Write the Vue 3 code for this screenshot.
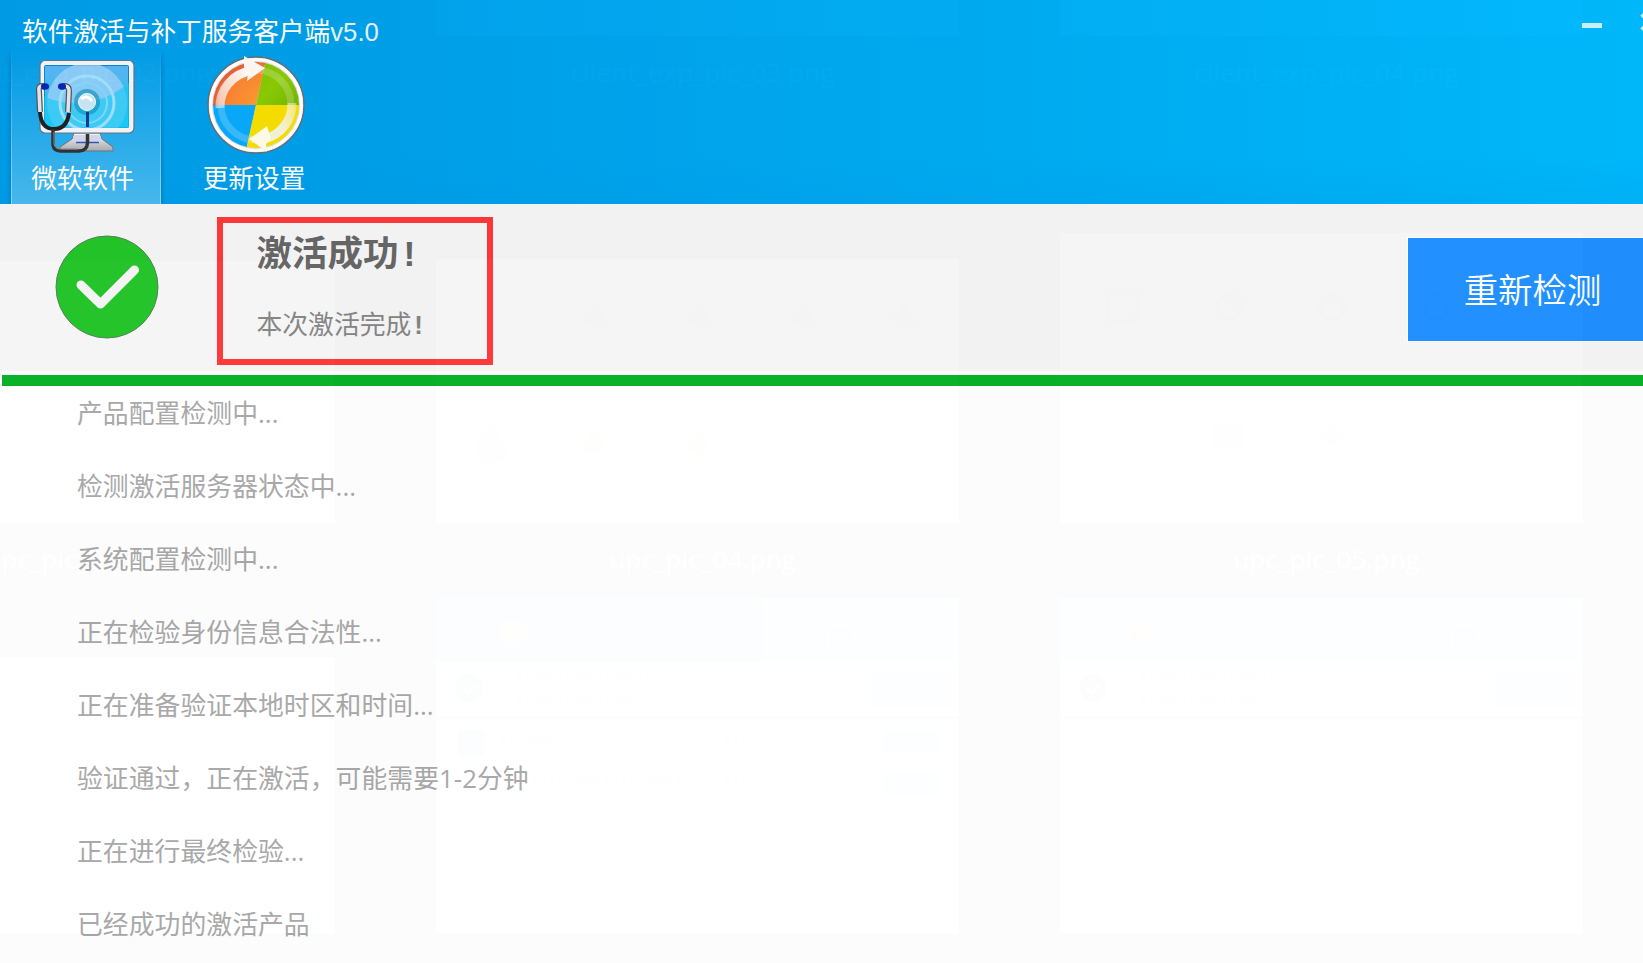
<template>
  <div class="desktop">
    <div class="files">
      <div v-for="row in fileRows" :key="row.id" :class="['file-row', row.id]">
        <div v-for="file in row.files" :key="file.id" class="file">
          <div :class="['thumb', file.kind]">
            <svg v-if="file.kind === 'shot'" width="523" height="335" viewBox="0 0 523 335">
              <rect width="523" height="64" fill="#1a9cf0" />
              <circle cx="78" cy="36" r="14" fill="#f0b040" />
              <circle cx="405" cy="40" r="14" fill="none" stroke="#fff" stroke-width="3" />
              <circle cx="33" cy="90" r="14" fill="#4a7860" />
              <path d="M27 90L32 95L40 86" fill="none" stroke="#fff" stroke-width="3" />
              <path d="M80 79H215M80 101H200" stroke="#aaa" stroke-width="6" stroke-dasharray="7 3" />
              <rect x="435" y="75" width="80" height="34" fill="#1b80ff" />
              <rect y="118" width="523" height="3" fill="#555" />
              <g v-if="file.list">
                <rect x="22" y="132" width="26" height="26" fill="#3b8eea" />
                <path d="M65 141H120M288 141H368M95 181H250M288 181H368" stroke="#aaa" stroke-width="5" stroke-dasharray="6 3" />
                <rect x="447" y="132" width="56" height="23" fill="#6bb8ff" />
                <rect x="447" y="174" width="56" height="22" fill="#6bb8ff" />
              </g>
            </svg>
            <svg v-else-if="file.kind === 'page'" width="523" height="264" viewBox="0 0 523 264">
              <g fill="#aaa">
                <path v-for="x in [147, 252, 356, 456]" :key="x" :d="`M${x} 60l14-18 10 24-14 3z`" />
                <path d="M38 190l18-30 16 38-20 8z" />
              </g>
              <path d="M145 187l15-18 8 22-12 5zM250 187l15-18 8 22-12 5z" fill="#e0b090" />
            </svg>
            <svg v-else-if="file.kind === 'tall'" width="523" height="290" viewBox="0 0 523 290">
              <g fill="none" stroke="#aaa" stroke-width="4">
                <rect x="49" y="60" width="28" height="28" rx="3" />
                <circle v-for="x in [169, 272, 376]" :key="x" :cx="x" cy="74" r="12" />
              </g>
              <rect x="154" y="190" width="30" height="26" fill="#c9e3f5" />
              <path d="M258 203l14-12 14 12-14 10z" fill="#f0c8b0" />
            </svg>
          </div>
          <span class="file-name">{{ file.name }}</span>
        </div>
      </div>
    </div>

    <div class="client">
      <header class="header">
        <div class="titlebar">
          <h1>软件激活与补丁服务客户端<span>v5.0</span></h1>
          <div class="controls">
            <button class="minimize" aria-label="minimize"></button>
            <button class="close" aria-label="close">
              <svg width="22" height="22" viewBox="0 0 22 22">
                <path d="M2 3L20 19M20 3L2 19" stroke="#ccf1ff" stroke-width="5" />
              </svg>
            </button>
          </div>
        </div>

        <nav class="tabs">
          <button :class="['tab', { active: activeTab === 'ms' }]" @click="activeTab = 'ms'">
            <svg class="tab-icon" width="104" height="102" viewBox="32 54 104 102">
              <defs>
                <linearGradient id="screen" x1="0" y1="0" x2="0" y2="1">
                  <stop offset="0" stop-color="#58b5f3" />
                  <stop offset="1" stop-color="#20c8f5" />
                </linearGradient>
                <linearGradient id="stand" x1="0" y1="0" x2="0" y2="1">
                  <stop offset="0" stop-color="#fafafa" />
                  <stop offset="1" stop-color="#a8abb2" />
                </linearGradient>
                <clipPath id="screenClip"><rect x="43" y="65" width="85" height="63" /></clipPath>
              </defs>
              <path d="M73 133H99L101 139L112 147V151H59V147L71 139Z" fill="url(#stand)" stroke="#70757d" />
              <path d="M73 135H99L101 142H71Z" fill="#d6d9ed" />
              <path d="M75 142.500H98" stroke="#3155b9" stroke-width="1.500" />
              <rect x="39" y="60.500" width="94" height="72.500" rx="5" fill="#f2f5f9" stroke="#667481" stroke-width="1.200" />
              <rect x="43.500" y="65.500" width="84" height="62" rx="1" fill="url(#screen)" stroke="#0d86c9" />
              <g clip-path="url(#screenClip)">
                <circle cx="86" cy="103" r="40" fill="#a6d4fa" opacity=".7" />
                <path d="M42 96Q88 116 129 82V130H42Z" fill="#19cdf8" opacity=".65" />
                <circle cx="86" cy="103" r="27" fill="none" stroke="#9ee1fc" stroke-width="3" />
                <circle cx="86" cy="103" r="20" fill="none" stroke="#83d9fa" stroke-width="2" />
              </g>
              <circle cx="86" cy="102" r="13" fill="#1592bd" opacity=".65" />
              <circle cx="86" cy="102" r="8.500" fill="#c9e7f3" stroke="#eaffff" />
              <path d="M80 99Q86 94 91 101" fill="none" stroke="#fff" stroke-width="3" />
              <path d="M86.500 112V127" stroke="#193a93" stroke-width="3" />
              <path d="M39 112Q40 129 53 129Q66 129 68 113" fill="none" stroke="#222" stroke-width="4" />
              <path d="M52 129V145Q53 151 60 151H78Q86 151 86.500 143V134" fill="none" stroke="#333" stroke-width="3.500" />
              <path d="M53 132V144Q54 149 60 149H77" fill="none" stroke="#8c8c91" stroke-width="1" />
              <path d="M44 87Q37 84 38 91L39 112M60 87Q68 84 68 91L67 112" fill="none" stroke="#4f5962" stroke-width="6" />
              <path d="M44 87Q37 84 38 91L39 112M60 87Q68 84 68 91L67 112" fill="none" stroke="#e5e6e8" stroke-width="3.500" />
              <ellipse cx="44" cy="86.500" rx="4" ry="3.200" fill="#0726b6" />
              <ellipse cx="61" cy="86.500" rx="4" ry="3.200" fill="#0726b6" />
            </svg>
            <span>微软软件</span>
          </button>
          <button :class="['tab', 'update', { active: activeTab === 'update' }]" @click="activeTab = 'update'">
            <svg class="tab-icon" width="104" height="102" viewBox="205 54 104 102">
              <defs>
                <clipPath id="disc"><circle cx="257" cy="105" r="43" /></clipPath>
                <radialGradient id="orange" cx="1" cy="1" r="1">
                  <stop offset="0" stop-color="#ffa030" />
                  <stop offset=".7" stop-color="#fb8434" />
                  <stop offset="1" stop-color="#de5038" />
                </radialGradient>
                <linearGradient id="green" x1="0" y1="0" x2="1" y2="1">
                  <stop offset="0" stop-color="#7cc400" />
                  <stop offset=".5" stop-color="#8ccb05" />
                  <stop offset="1" stop-color="#6fb300" />
                </linearGradient>
                <linearGradient id="whiteArrow" x1="0" y1="1" x2="1" y2="0">
                  <stop offset="0" stop-color="#fff" stop-opacity=".5" />
                  <stop offset="1" stop-color="#fff" />
                </linearGradient>
                <linearGradient id="creamArrow" x1="1" y1="0" x2="0" y2="1">
                  <stop offset="0" stop-color="#f6f2d5" stop-opacity=".5" />
                  <stop offset=".5" stop-color="#f6f2d5" />
                </linearGradient>
              </defs>
              <circle cx="257" cy="105" r="48" fill="#dedede" stroke="#666f76" stroke-width="1.500" />
              <circle cx="257" cy="105" r="45.500" fill="none" stroke="#fff" stroke-width="3" />
              <g clip-path="url(#disc)">
                <path d="M210 55H268L257 105H210Z" fill="url(#orange)" />
                <path d="M268 55H305V105H257Z" fill="url(#green)" />
                <path d="M210 105H257L246 155H210Z" fill="#08a9fb" />
                <path d="M257 105H305V155H246Z" fill="#f8df00" />
                <circle cx="257" cy="105" r="35" fill="none" stroke="#fff" stroke-width="7" opacity=".2" />
              </g>
              <path d="M221 108A36 36 0 0 1 252 71" fill="none" stroke="url(#whiteArrow)" stroke-width="9" />
              <path d="M245 56L266 68L248 81L249 75L245 67Z" fill="#fff9f5" />
              <path d="M293 103A36 36 0 0 1 265 139" fill="none" stroke="url(#creamArrow)" stroke-width="9" />
              <path d="M268 126L250 139L268 152L267 144L272 139Z" fill="#fffce9" />
            </svg>
            <span>更新设置</span>
          </button>
        </nav>
      </header>

      <section class="status">
        <svg class="check" width="104" height="104" viewBox="0 0 104 104">
          <circle cx="52" cy="52" r="51" fill="#24c429" stroke="#538257" stroke-width="1" />
          <path d="M26 50L45.500 69L79.500 35" fill="none" stroke="#f4f4f4" stroke-width="9" stroke-linecap="round" stroke-linejoin="round" />
        </svg>
        <div class="result">
          <h2>激活成功<span>!</span></h2>
          <p>本次激活完成<b>!</b></p>
        </div>
        <button class="recheck">重新检测</button>
      </section>

      <div class="progress"></div>

      <ul class="log">
        <li v-for="line in logs" :key="line">{{ line }}</li>
      </ul>
    </div>
  </div>
</template>

<script setup>
import { ref } from 'vue'

const activeTab = ref('ms')

const logs = ref([
  '产品配置检测中...',
  '检测激活服务器状态中...',
  '系统配置检测中...',
  '正在检验身份信息合法性...',
  '正在准备验证本地时区和时间...',
  '验证通过，正在激活，可能需要1-2分钟',
  '正在进行最终检验...',
  '已经成功的激活产品'
])

// files on the desktop, seen faintly through the client window
const fileRows = [
  {
    id: 'first',
    files: [
      { id: 1, name: 'client_exp_pic_02.png', kind: 'none' },
      { id: 2, name: 'client_exp_pic_03.png', kind: 'blank' },
      { id: 3, name: 'client_exp_pic_04.png', kind: 'blank' }
    ]
  },
  {
    id: 'second',
    files: [
      { id: 4, name: 'upc_pic_03.png', kind: 'plain' },
      { id: 5, name: 'upc_pic_04.png', kind: 'page' },
      { id: 6, name: 'upc_pic_05.png', kind: 'tall' }
    ]
  },
  {
    id: 'third',
    files: [
      { id: 7, name: '', kind: 'short' },
      { id: 8, name: '', kind: 'shot', list: true },
      { id: 9, name: '', kind: 'shot', list: false }
    ]
  }
]
</script>

<style>
body {
  margin: 0;
  overflow: hidden;
}
</style>

<style scoped>
.desktop {
  position: relative;
  width: 1643px;
  height: 963px;
  overflow: hidden;
  background: #1c1c1c;
  font-family: "Liberation Sans", "Noto Sans CJK SC", sans-serif;
}

button {
  margin: 0;
  padding: 0;
  border: 0;
  background: none;
  font-family: inherit;
}

/* desktop behind the window */
.files {
  position: absolute;
  inset: 0;
}

.file-row {
  display: flex;
  align-items: flex-end;
  gap: 101px;
  width: 1771px;
  margin-left: -188px;
}

.file {
  width: 523px;
  display: flex;
  flex-direction: column;
}

.thumb {
  background: #fff;
}

.thumb svg {
  display: block;
}

.first .thumb {
  height: 36px;
}

.thumb.none {
  background: none;
}

.thumb.plain {
  height: 262px;
}

.thumb.page {
  height: 264px;
}

.thumb.tall {
  height: 290px;
}

.thumb.short {
  height: 276px;
}

.first {
  height: 111px;
}

.second {
  height: 365px;
  margin-top: 122px;
}

.third {
  height: 410px;
}

.file-name {
  height: 75px;
  padding-left: 10px;
  line-height: 73px;
  text-align: center;
  color: #fff;
  font-family: "Open Sans", sans-serif;
  font-size: 26.300px;
}

/* client window */
.client {
  position: relative;
  height: 963px;
  opacity: .988;
  background: #fff;
}

.header {
  height: 204px;
  background: linear-gradient(to bottom, transparent 155px, rgba(0, 150, 230, .2)),
    linear-gradient(to right, #009ce7, #00a1eb 26%, #00acf2 61%, #00b9fd);
}

.titlebar {
  display: flex;
  justify-content: space-between;
  height: 50px;
  padding-left: 22px;
}

h1 {
  margin: 0;
  color: #fff;
  font-size: 25.700px;
  font-weight: 400;
  line-height: 65px;
}

h1 span {
  opacity: .9;
}

.controls {
  display: flex;
  gap: 38px;
  margin-right: -19px;
}

.minimize {
  width: 20px;
  height: 5px;
  margin-top: 23px;
  background: #ccf1ff;
}

.close {
  width: 22px;
  height: 22px;
  margin-top: 11px;
}

.close svg {
  display: block;
}

.tabs {
  display: flex;
  gap: 20px;
  height: 154px;
  padding-left: 11px;
}

.tab {
  box-sizing: border-box;
  width: 150px;
  display: flex;
  flex-direction: column;
  align-items: center;
  padding-top: 4px;
  color: #fff;
  font-size: 25.700px;
  font-weight: 400;
}

.tab.active {
  padding-right: 7px;
  border-left: 1px solid;
  border-right: 1px solid;
  border-image: linear-gradient(transparent, #8ed8fa) 1;
  background: linear-gradient(to bottom, rgba(75, 184, 238, 0), #48b9ef);
  box-shadow: 0 5px 5px rgba(0, 75, 130, .45);
  clip-path: inset(0 -4px 0 -4px);
}

.tab.update {
  padding-right: 4px;
}

.tab-icon {
  flex: none;
  margin-left: 4px;
}

.tab span {
  margin-top: 4px;
  line-height: 38px;
}

.status {
  display: flex;
  align-items: flex-start;
  height: 167px;
  background: #f5f5f5;
}

.check {
  flex: none;
  margin: 31px 0 0 55px;
}

.result {
  box-sizing: border-box;
  width: 276px;
  height: 148px;
  margin: 13px 0 0 57.500px;
  padding: 2px 0 0 34px;
  border: 6px solid #ff3838;
}

h2 {
  margin: 0;
  color: #666;
  font-size: 35.500px;
  font-weight: 700;
  line-height: 59px;
}

h2 span {
  margin-left: 5px;
  font-weight: 700;
}

.result p {
  margin: 16px 0 0;
  color: #858585;
  font-size: 25.800px;
  font-weight: 400;
  line-height: 50px;
}

.result b {
  margin-left: 3px;
}

.recheck {
  width: 236px;
  height: 103px;
  margin: 34px -1px 0 auto;
  padding: 0 0 4px 13px;
  box-shadow: 0 0 0 1px #fff;
  background: #2090ff;
  color: #fff;
  font-size: 34.400px;
  font-weight: 350;
}

.progress {
  height: 11px;
  margin: 4px 0 0 2px;
  background: #08b228;
}

.log {
  margin: 0;
  padding: 0 0 0 77px;
  list-style: none;
}

.log li {
  height: 73px;
  line-height: 54px;
  color: #a8a8a8;
  font-family: "Open Sans", "Noto Sans CJK SC", sans-serif;
  font-size: 25.800px;
  font-weight: 400;
  letter-spacing: .06px;
}
</style>
